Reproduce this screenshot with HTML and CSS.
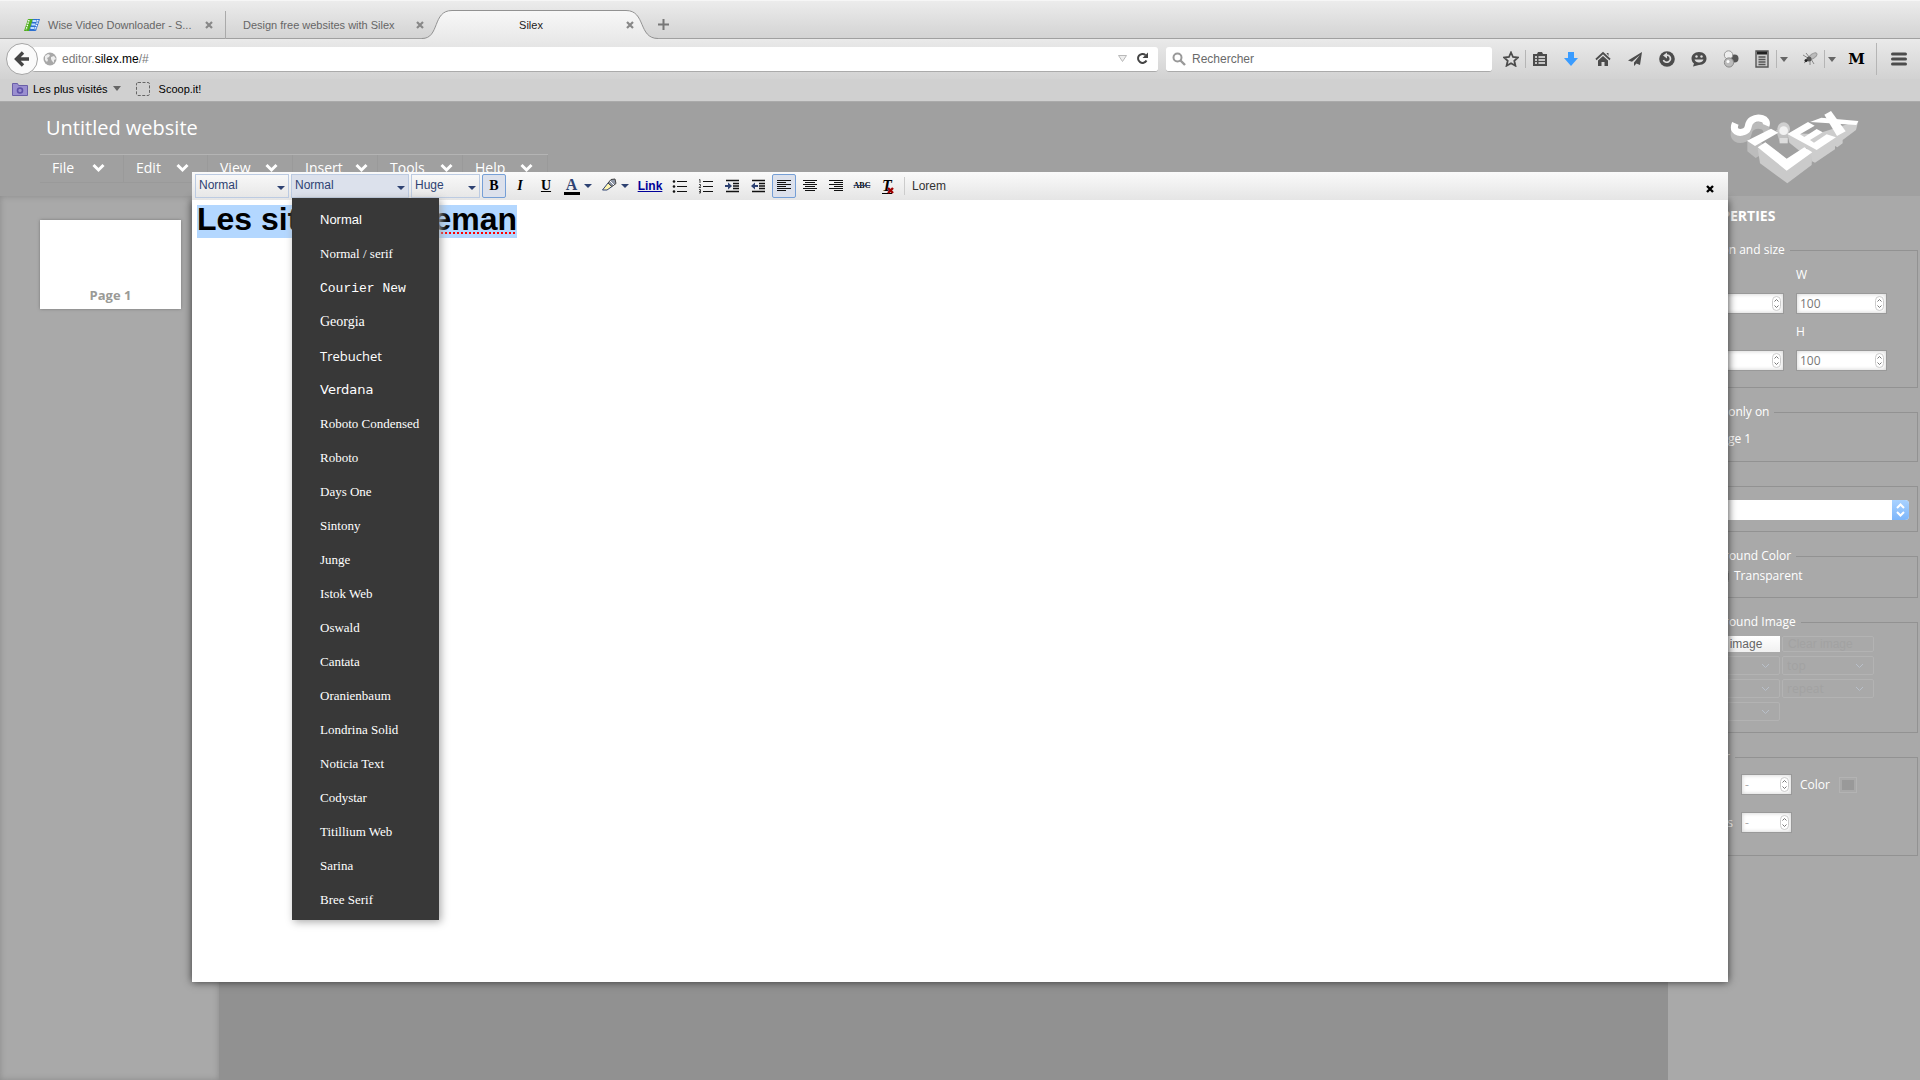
FILE: index.html
```html
<!DOCTYPE html>
<html lang="fr">
<head>
<meta charset="utf-8">
<title>Silex</title>
<link rel="stylesheet" href="styles.css">
</head>
<body>
<header class="browser">
  <nav class="tabs" aria-label="Tabs">
    <div class="tab tab-first">
      <svg class="favicon" viewBox="0 0 16 14" width="16" height="14"><path d="M4 1h6L6 13H0z" fill="#4fae1c"/><path d="M9 1h7l-4 12H5z" fill="#2c6fd0"/><path d="M5 2 2 12M14 2l-3 10" stroke="#fff" stroke-width="1.4" stroke-dasharray="1.5 1"/><path d="M8.500 3h4M7.500 6.500h4M6.500 10h4" stroke="#bfe0ff" stroke-width="2"/></svg>
      <a class="tab-name" href="#">Wise Video Downloader - S...</a>
      <button class="tab-close" aria-label="Close tab"><svg viewBox="0 0 8 8" width="8" height="8"><path d="M1 1l6 6M7 1 1 7" stroke="#888" stroke-width="2.200"/></svg></button>
    </div>
    <div class="tab tab-second">
      <a class="tab-name" href="#">Design free websites with Silex</a>
      <button class="tab-close" aria-label="Close tab"><svg viewBox="0 0 8 8" width="8" height="8"><path d="M1 1l6 6M7 1 1 7" stroke="#888" stroke-width="2.200"/></svg></button>
    </div>
    <div class="tab tab-active">
      <svg class="tab-shape" viewBox="0 0 236 30" width="236" height="30"><defs><linearGradient id="tabfill" x2="0" y2="1"><stop offset="0" stop-color="#f8f8f8"/><stop offset="1" stop-color="#e9e9e9"/></linearGradient></defs><path d="M0 28.500C18 28.500 10 .500 30 .500H204C224 .500 216 28.500 236 28.500V30H0z" fill="url(#tabfill)"/><path d="M0 28.500C18 28.500 10 .500 30 .500H204C224 .500 216 28.500 236 28.500" fill="none" stroke="#929292"/></svg>
      <a class="tab-name" href="#">Silex</a>
      <button class="tab-close" aria-label="Close tab"><svg viewBox="0 0 8 8" width="8" height="8"><path d="M1 1l6 6M7 1 1 7" stroke="#888" stroke-width="2.200"/></svg></button>
    </div>
    <button class="tab-new" aria-label="New tab"><svg viewBox="0 0 11 11" width="11" height="11"><path d="M5.500 0v11M0 5.500h11" stroke="#777" stroke-width="2"/></svg></button>
  </nav>
  <div class="navbar">
    <button class="back" aria-label="Back"><svg viewBox="0 0 16 16" width="16" height="16"><path d="M9 1.500 2.500 8 9 14.500M3 8h12" fill="none" stroke="#444" stroke-width="3.400"/></svg></button>
    <div class="url">
      <svg viewBox="0 0 14 14" width="14" height="14"><circle cx="7" cy="7" r="6.500" fill="#a8a8a8"/><path d="M2 4l3-2 2 1-1 2-2 1 1 2-1 2-2-2zM8 5l3-1 2 3-2 1 0 3-2-2-1-2z" fill="#eee"/></svg>
      <div class="url-field"><input class="plain" type="text" aria-label="Address"><span class="url-text">editor.<b>silex.me</b>/#</span></div>
      <svg viewBox="0 0 9 7" width="9" height="7"><path d="M.500.500h8l-4 6z" fill="#eee" stroke="#b9b9b9"/></svg>
      <button class="reload" aria-label="Reload"><svg viewBox="0 0 13 13" width="13" height="13"><path d="M10.500 8.500A4.500 4.500 0 1 1 9.500 3" fill="none" stroke="#444" stroke-width="2"/><path d="M12 .500V6H6.500z" fill="#444"/></svg></button>
    </div>
    <div class="search">
      <svg viewBox="0 0 14 14" width="14" height="14"><circle cx="5.500" cy="5.500" r="4" fill="none" stroke="#999" stroke-width="2"/><path d="M8.500 8.500 13 13" stroke="#999" stroke-width="2.400"/></svg>
      <input class="plain" type="search" placeholder="Rechercher" aria-label="Rechercher">
    </div>
    <div class="tools">
      <button aria-label="Bookmark"><svg viewBox="0 0 16 16" width="16" height="16"><path d="M8 1.500l2 4.500 5 .500-3.700 3.300 1.100 4.900L8 12.200l-4.400 2.500 1.100-4.900L1 6.500 6 6z" fill="none" stroke="#4c4c4c" stroke-width="1.800"/></svg></button>
      <i class="rule"></i>
      <button aria-label="Bookmarks list"><svg viewBox="0 0 16 16" width="16" height="16"><path d="M1 3h4l1-2h4l1 2h4v12H1z" fill="#4c4c4c"/><path d="M3 6h2M6.500 6H13M3 9h2M6.500 9H13M3 12h2M6.500 12H13" stroke="#eee" stroke-width="1.600"/></svg></button>
      <button class="t7" aria-label="Downloads"><svg viewBox="0 0 16 16" width="16" height="16"><path d="M5 1h6v6h4l-7 8-7-8h4z" fill="#3a9cff"/></svg></button>
      <button class="t8" aria-label="Home"><svg viewBox="0 0 16 16" width="16" height="16"><path d="M1 8.500 8 2l7 6.500" fill="none" stroke="#4c4c4c" stroke-width="1.800"/><path d="M3 9.500 8 5l5 4.500V15H9.500v-4h-3v4H3zM11.500 2h2v3z" fill="#4c4c4c"/></svg></button>
      <button class="t8" aria-label="Send"><svg viewBox="0 0 16 16" width="16" height="16"><path d="M15 1 1 9.500l4 1.200L13 4l-6 7.500V15l2.500-2.500L13 14z" fill="#4c4c4c"/></svg></button>
      <button class="t8" aria-label="Sync"><svg viewBox="0 0 16 16" width="16" height="16"><circle cx="8" cy="8" r="7.800" fill="#4c4c4c"/><path d="M6 4.500C11 3 13 8 10 10.500 7.500 12 5 11 4.500 9" fill="none" stroke="#ddd" stroke-width="1.600"/><path d="M8 1.500v6L4 4.500z" fill="#ddd"/></svg></button>
      <button class="t8" aria-label="Hello"><svg viewBox="0 0 16 16" width="16" height="16"><path d="M8 1c10 0 10 13 0 13L2 15.500l1-3C-2 8 1 1 8 1z" fill="#4c4c4c"/><circle cx="5.500" cy="5.500" r="1.200" fill="#ddd"/><circle cx="10.500" cy="5.500" r="1.200" fill="#ddd"/><path d="M3.500 8.500h9c-1 4-8 4-9 0z" fill="#ddd"/></svg></button>
      <button class="t8" aria-label="Extension"><svg viewBox="0 0 16 18" width="16" height="18"><circle cx="11.500" cy="8.500" r="4" fill="#555"/><circle cx="5.500" cy="5" r="4.200" fill="#eee" stroke="#999"/><circle cx="6" cy="12.500" r="4.600" fill="#bbb" stroke="#888"/><circle cx="5" cy="11.500" r="1.500" fill="#fff"/></svg></button>
      <button class="t7" aria-label="Notes"><svg viewBox="0 0 16 18" width="16" height="18"><path d="M2 1h12v16H2z" fill="#ccc" stroke="#555" stroke-width="1.400"/><path d="M3 3h10" stroke="#222" stroke-width="3"/><path d="M4.500 7h7M4.500 9.500h7M4.500 12h7M4.500 14.500h7" stroke="#555" stroke-width="1.400"/></svg></button>
      <i class="rule"></i><i class="down"></i>
      <button class="t8" aria-label="Debug"><svg viewBox="0 0 16 16" width="16" height="16"><path d="M1 4l5 3M4 2l4 5M2 12l5-4M8 14V8M12 13 9 8" stroke="#888"/><ellipse cx="11" cy="5" rx="4.500" ry="2.200" fill="#bbb" stroke="#999" transform="rotate(-35 11 5)"/><circle cx="7" cy="8" r="2.500" fill="#555"/><circle cx="4" cy="9.500" r="1.500" fill="#222"/></svg></button>
      <i class="rule"></i><i class="down"></i>
      <button class="letter-m" aria-label="M">M</button>
      <i class="rule rule-tall"></i>
      <button aria-label="Menu"><svg viewBox="0 0 16 14" width="16" height="14"><path d="M1.500 2h13M1.500 7h13M1.500 12h13" stroke="#4c4c4c" stroke-width="3" stroke-linecap="round"/></svg></button>
    </div>
  </div>
  <div class="bookmarks">
    <button><svg viewBox="0 0 16 14" width="16" height="14"><path d="M.500 1.500h5l1 2h9v10H.500z" fill="#9a8fd0" stroke="#6a5fa8"/><circle cx="8" cy="8.500" r="2.500" fill="none" stroke="#5d50a8" stroke-width="1.600"/></svg><span>Les plus visités</span><i class="down"></i></button>
    <button><svg viewBox="0 0 14 14" width="14" height="14"><rect x=".5" y=".5" width="13" height="13" rx="1.500" fill="none" stroke="#666" stroke-dasharray="3 1.500"/></svg><span class="scoop">Scoop.it!</span></button>
  </div>
</header>

<main class="app">
  <header class="app-head">
    <div class="app-bar">
      <h1>Untitled website</h1>
      <nav class="menu">
        <button>File<svg viewBox="0 0 13 10" width="13" height="10"><path d="M1.500 2 6.500 7l5-5" /></svg></button>
        <button>Edit<svg viewBox="0 0 13 10" width="13" height="10"><path d="M1.500 2 6.500 7l5-5" /></svg></button>
        <button>View<svg viewBox="0 0 13 10" width="13" height="10"><path d="M1.500 2 6.500 7l5-5" /></svg></button>
        <button>Insert<svg viewBox="0 0 13 10" width="13" height="10"><path d="M1.500 2 6.500 7l5-5" /></svg></button>
        <button>Tools<svg viewBox="0 0 13 10" width="13" height="10"><path d="M1.500 2 6.500 7l5-5" /></svg></button>
        <button>Help<svg viewBox="0 0 13 10" width="13" height="10"><path d="M1.500 2 6.500 7l5-5" /></svg></button>
      </nav>
    </div>
    <svg class="logo" viewBox="270 30 390 225" width="130" height="75" role="img" aria-label="Silex">
      <g fill="none" stroke="#bababa" stroke-width="20"><path d="M378 98c8-20-24-28-42-16s-4 26-22 34-38 0-30-24"/><path d="M285 86v24M300 95v28M378 78v14"/></g>
      <path d="M322 122v32l25 20 20-12V128z" fill="#bcbcbc"/>
      <path d="M353 145l7 45 82 60 73-55 2-38-77 20z" fill="#cacaca"/>
      <path d="M442 100l6 28 30 24 22-8 16 26v14l9 4 60-40 0-10 7 4 16-12v-10l40-30 7-28-125 40z" fill="#cdcdcd"/>
      <path d="M408 90l12 38h22l4-42z" fill="#c2c2c2"/><circle cx="431" cy="86" r="19" fill="#cfcfcf"/><circle cx="431" cy="92" r="13" fill="#f2f2f2"/><path d="M419 114h24v16h-24z" fill="#ddd"/>
      <g fill="#fff"><path d="M353 142l23-15 64 49 53-34 24 15-77 55z"/><path d="M321 122l72-36 22 12-70 40z"/><path d="M442 102l62-36 20 11-44 26 13 8 37-24 18 10-38 23 12 8 38-25 28 9-58 38z"/><path d="M553 44l20-11 44 61-26 14z"/><path d="M510 66l34-13 111 10-6 12z"/></g>
      <path d="M378 76c8-20-24-28-42-16s-4 26-22 34-38 0-28-24" fill="none" stroke="#fff" stroke-width="21"/>
    </svg>
  </header>
  <div class="columns">
    <aside class="pages"><a class="page-card" href="#">Page 1</a></aside>
    <section class="stage" aria-label="Stage"></section>
    <aside class="props">
      <h2>PROPERTIES</h2>
      <fieldset class="geometry"><legend>Position and size</legend>
        <label for="px">X</label><label for="pw">W</label>
        <span class="num"><input id="px" type="text"><svg viewBox="0 0 9 15" width="9" height="15"><rect x=".5" y=".5" width="8" height="14" rx="4"/><path d="M2.500 5.500l2-2 2 2M2.500 9.500l2 2 2-2"/></svg></span>
        <span class="num"><input id="pw" type="text" value="100"><svg viewBox="0 0 9 15" width="9" height="15"><rect x=".5" y=".5" width="8" height="14" rx="4"/><path d="M2.500 5.500l2-2 2 2M2.500 9.500l2 2 2-2"/></svg></span>
        <label for="py">Y</label><label for="ph">H</label>
        <span class="num"><input id="py" type="text"><svg viewBox="0 0 9 15" width="9" height="15"><rect x=".5" y=".5" width="8" height="14" rx="4"/><path d="M2.500 5.500l2-2 2 2M2.500 9.500l2 2 2-2"/></svg></span>
        <span class="num"><input id="ph" type="text" value="100"><svg viewBox="0 0 9 15" width="9" height="15"><rect x=".5" y=".5" width="8" height="14" rx="4"/><path d="M2.500 5.500l2-2 2 2M2.500 9.500l2 2 2-2"/></svg></span>
      </fieldset>
      <fieldset class="viewable"><legend>Visible only on</legend>
        <label class="tick"><input type="checkbox">Page 1</label>
      </fieldset>
      <fieldset class="link"><legend>Link</legend>
        <span class="combo"><select aria-label="Link"><option></option></select><svg viewBox="0 0 17 20" width="17" height="20"><path d="M5 8l3.500-3.500L12 8M5 12l3.500 3.500L12 12"/></svg></span>
      </fieldset>
      <fieldset class="bgcolor"><legend>Background Color</legend>
        <button class="well" aria-label="Background color"></button>
        <label class="tick"><input type="checkbox">Transparent</label>
      </fieldset>
      <fieldset class="bgimage"><legend>Background Image</legend>
        <button class="pick-image">Select image</button><button class="ghost" disabled>Clear image</button>
        <span class="ghost-pick"><select disabled aria-label="Scroll"><option></option></select><svg viewBox="0 0 9 6" width="9" height="6"><path d="M1 1l3.500 3.500L8 1"/></svg></span>
        <span class="ghost-pick"><select disabled aria-label="Vertical"><option>top</option></select><svg viewBox="0 0 9 6" width="9" height="6"><path d="M1 1l3.500 3.500L8 1"/></svg></span>
        <span class="ghost-pick"><select disabled aria-label="Horizontal"><option></option></select><svg viewBox="0 0 9 6" width="9" height="6"><path d="M1 1l3.500 3.500L8 1"/></svg></span>
        <span class="ghost-pick"><select disabled aria-label="Repeat"><option>repeat</option></select><svg viewBox="0 0 9 6" width="9" height="6"><path d="M1 1l3.500 3.500L8 1"/></svg></span>
        <span class="ghost-pick"><select disabled aria-label="Size"><option></option></select><svg viewBox="0 0 9 6" width="9" height="6"><path d="M1 1l3.500 3.500L8 1"/></svg></span>
      </fieldset>
      <fieldset class="border"><legend>Border</legend>
        <label class="border-width" for="bw">Width</label><span class="num"><input id="bw" type="text" value="-"><svg viewBox="0 0 9 15" width="9" height="15"><rect x=".5" y=".5" width="8" height="14" rx="4"/><path d="M2.500 5.500l2-2 2 2M2.500 9.500l2 2 2-2"/></svg></span>
        <label class="color-field">Color<button class="swatch" aria-label="Border color"></button></label>
        <label class="border-radius" for="br">Radius</label><span class="num"><input id="br" type="text" value="-"><svg viewBox="0 0 9 15" width="9" height="15"><rect x=".5" y=".5" width="8" height="14" rx="4"/><path d="M2.500 5.500l2-2 2 2M2.500 9.500l2 2 2-2"/></svg></span>
      </fieldset>
    </aside>
  </div>

  <section class="editor" role="dialog" aria-label="Text editor">
    <div class="bar">
      <span class="pick pick-format"><select aria-label="Format"><option>Normal</option></select></span>
      <div class="pick pick-font is-open"><button class="font-button" aria-haspopup="true">Normal</button>
        <ul class="fonts">
          <li class="f-sans">Normal</li><li>Normal / serif</li><li class="f-mono">Courier New</li><li class="f-georgia">Georgia</li><li class="f-treb">Trebuchet</li><li class="f-verdana">Verdana</li><li>Roboto Condensed</li><li>Roboto</li><li>Days One</li><li>Sintony</li><li>Junge</li><li>Istok Web</li><li>Oswald</li><li>Cantata</li><li>Oranienbaum</li><li>Londrina Solid</li><li>Noticia Text</li><li>Codystar</li><li>Titillium Web</li><li>Sarina</li><li>Bree Serif</li>
        </ul>
      </div>
      <span class="pick pick-size"><select aria-label="Size"><option>Huge</option></select></span>
      <button class="b on bold">B</button>
      <button class="b italic">I</button>
      <button class="b under">U</button>
      <button class="b wide"><span class="ink">A</span><i class="caret"></i></button>
      <button class="b wide" aria-label="Highlight"><svg viewBox="0 0 16 16" width="16" height="16"><path d="M1.500 12 7 5l4 3.500L6 12z" fill="#fff6b0" stroke="#2e4272"/><path d="M7 5l3-3.500L14 1l1 4.500-4 3z" fill="#8e97a8" stroke="#444"/><path d="M9 3l4 4" stroke="#fff"/></svg><i class="caret"></i></button>
      <button class="b link-button">Link</button>
      <button class="b" aria-label="Bullets"><svg viewBox="0 0 16 16" width="16" height="16"><path d="M5 3.500h10M5 8.500h10M5 13.500h10" stroke="#111"/><g fill="#111"><circle cx="2" cy="3.500" r="1.300"/><circle cx="2" cy="8.500" r="1.300"/><circle cx="2" cy="13.500" r="1.300"/></g></svg></button>
      <button class="b" aria-label="Numbers"><svg viewBox="0 0 16 16" width="16" height="16"><path d="M5 3.500h10M5 8.500h10M5 13.500h10" stroke="#111"/><path d="M1 2l1-.500v3.500M1 6.500h1.500v1.500L1 9.500h2M1 11.500h1.500V15H1M1 13.500h1.500" fill="none" stroke="#444"/></svg></button>
      <button class="b" aria-label="Indent"><svg viewBox="0 0 16 16" width="16" height="16"><path d="M2 2.500h13M9 5.500h6M9 8h6M9 10.500h6M2 13.500h13" stroke="#111" stroke-width="1.400"/><path d="M1 7h3V4.500L8 8l-4 3.500V9H1z" fill="#2e4272"/></svg></button>
      <button class="b" aria-label="Outdent"><svg viewBox="0 0 16 16" width="16" height="16"><path d="M2 2.500h13M9 5.500h6M9 8h6M9 10.500h6M2 13.500h13" stroke="#111" stroke-width="1.400"/><path d="M8 7H5V4.500L1 8l4 3.500V9h3z" fill="#2e4272"/></svg></button>
      <button class="b on" aria-label="Left"><svg viewBox="0 0 16 16" width="16" height="16"><path d="M1 2.500h14M1 4.500h9M1 6.500h14M1 8.500h9M1 10.500h14M1 12.500h9" stroke="#111"/></svg></button>
      <button class="b" aria-label="Center"><svg viewBox="0 0 16 16" width="16" height="16"><path d="M1 2.500h14M3 4.500h10M1 6.500h14M3 8.500h10M1 10.500h14M3 12.500h10" stroke="#111"/></svg></button>
      <button class="b" aria-label="Right"><svg viewBox="0 0 16 16" width="16" height="16"><path d="M1 2.500h14M6 4.500h9M1 6.500h14M6 8.500h9M1 10.500h14M6 12.500h9" stroke="#111"/></svg></button>
      <button class="b strike">ABC</button>
      <button class="b clear"><em>T</em><svg viewBox="0 0 7 7" width="7" height="7"><path d="M1 1l5 5M6 1 1 6" stroke="#a00000" stroke-width="2.400"/></svg></button>
      <i class="bar-rule"></i>
      <button class="lorem">Lorem</button>
      <button class="close" aria-label="Close"><svg viewBox="0 0 8 8" width="8" height="8"><path d="M1 1l6 6M7 1 1 7" stroke="#000" stroke-width="2.400"/></svg></button>
    </div>
    <div class="page" contenteditable="true" spellcheck="false"><span class="picked">Les sites de <span class="misspelt">Goeman</span></span></div>
  </section>
</main>
</body>
</html>
```
FILE: styles.css
```css
* { box-sizing: border-box; }
body { margin: 0; min-height: 100vh; display: flex; flex-direction: column; font: 12px/18px "Liberation Sans", Arial, sans-serif; color: #000; }
button, input, select { font: inherit; color: inherit; margin: 0; padding: 0; border: 0; background: none; border-radius: 0; outline: 0; }
select { appearance: none; opacity: 1; }
a { color: inherit; text-decoration: none; }
svg { display: block; flex: none; }
i { font-style: normal; flex: none; }

/* browser chrome */
.browser { background: #d0d0d0; border-bottom: 1px solid #aaa; }
.tabs { height: 39px; padding-top: 10px; display: flex; background: linear-gradient(#ececec, #d3d3d3); border-bottom: 1px solid #a0a0a0; border-top: 1px solid #f6f6f6; font-size: 11px; }
.tab { display: flex; align-items: center; color: #666; height: 28px; }
.tab-first { width: 226px; padding: 0 12px 0 24px; border-right: 1px solid #aaa; }
.tab-second { width: 204px; padding: 0 6px 0 17px; }
.tab-active { width: 220px; position: relative; padding: 0 16px 0 0; color: #222; }
.tab-shape { position: absolute; left: -8px; top: -1px; }
.tab-name { flex: 1; white-space: nowrap; position: relative; }
.favicon { margin-right: 8px; }
.tab-active .tab-name { text-align: center; padding-left: 6px; }
.tab-close { position: relative; }
.tab-new { margin-left: 8px; }
.navbar { height: 40px; padding: 0 13px 0 6px; display: flex; align-items: center; background: linear-gradient(#eaeaea, #d2d2d2); }
.back { width: 32px; height: 32px; border-radius: 50%; background: #fafafa; border: 1px solid #a5a5a5; display: grid; place-items: center; z-index: 1; }
.url, .search { height: 25px; background: #fff; display: flex; align-items: center; border-bottom: 1px solid #aaa; border-radius: 3px; }
.url { flex: 1; margin-left: -6px; padding: 0 9px 0 11px; }
.url-field { flex: 1; display: grid; margin-left: 5px; }
.url-field > * { grid-area: 1 / 1; }
.url-text { color: #777; pointer-events: none; }
.url-text b { font-weight: normal; color: #000; }
.reload { margin-left: 9px; }
.search { width: 326px; margin-left: 8px; padding: 0 6px; gap: 6px; }
.plain { flex: 1; min-width: 0; }
.plain::placeholder { color: #6a6a6a; opacity: 1; }
.tools { display: flex; align-items: center; margin-left: 11px; }
.rule { width: 1px; height: 18px; background: #b5b5b5; margin: 0 6px; }
.down { width: 0; border: 4px solid transparent; border-top: 5px solid #666; border-bottom: 0; }
.t7 { margin-left: 15px; }
.t8 { margin-left: 16px; }
.rule + .down { margin-left: -3px; }
.down + .t8 { margin-left: 14px; }
.letter-m { font: bold 15px/20px "DejaVu Serif", serif; width: 17px; margin-left: 12px; }
.rule-tall { height: 32px; margin: 0 14px 0 11px; }
.bookmarks { height: 22px; display: flex; align-items: center; gap: 15px; padding: 0 12px 3px; color: #000; font-size: 11px; }
.bookmarks button { display: flex; align-items: center; gap: 5px; }
.scoop { padding-left: 4px; }

/* site editor behind the dialog */
.app { flex: 1; display: flex; flex-direction: column; position: relative; font-family: "Open Sans", sans-serif; font-size: 12px; color: #fff; }
.app-head { height: 94px; background: #a0a0a0; display: flex; justify-content: space-between; padding: 8px 60px 0 40px; }
.app-bar { display: flex; flex-direction: column; }
h1 { margin: 6px 0 14px 6px; font: 20px/24px "Open Sans", sans-serif; }
.menu { display: flex; font-size: 14px; border-top: 1px solid #b4b4b4; }
.menu button { width: 84px; height: 28px; padding: 0 18px 2px 12px; display: flex; align-items: center; justify-content: space-between; border-right: 1px solid #9a9a9a; border-bottom: 1px solid #9a9a9a; }
.menu button:nth-child(n+3) { width: 85px; padding-right: 14px; }
.menu button:nth-child(4), .menu button:nth-child(5) { padding-right: 9px; }
.menu path { fill: none; stroke: #fff; stroke-width: 3; }
.columns { flex: 1; display: flex; }
.pages { width: 219px; background: #a9a9a9; box-shadow: inset 0 0 6px #8a8a8a; padding: 24px 38px 0 40px; }
.page-card { height: 89px; background: #fff; box-shadow: 0 0 3px #777; color: #9a9a96; font-size: 13px; font-weight: bold; display: flex; align-items: flex-end; justify-content: center; padding-bottom: 5px; }
.stage { flex: 1; background: #919191; }
.props { width: 252px; background: #a9a9a9; padding: 10px 2px 0 7px; }
h2 { margin: 0 0 15px 17px; font: bold 14px/20px "Open Sans", sans-serif; }
fieldset { border: 1px solid #929292; margin: 0 0 15px; padding: 0 8px 0 10px; min-width: 0; }
legend { padding: 0 5px; line-height: 18px; }
.num { display: flex; align-items: center; background: #fff; border: 1px solid #999; box-shadow: inset 0 0 4px #ccc; height: 21px; padding: 0 2px 0 3px; color: #777; }
.num input { flex: 1; min-width: 0; width: 10px; height: 19px; }
.num svg { fill: #fff; stroke: #ccc; }
.num svg path { fill: none; stroke: #777; }
.geometry { display: grid; grid-template-columns: 98px 91px; gap: 9px 12px; padding-top: 7px; padding-bottom: 16px; }
.tick { display: flex; align-items: center; gap: 5px; }
.tick input { width: 13px; height: 13px; }
.viewable { padding: 9px 8px 13px 20px; }
.viewable legend { margin-left: -12px; }
.link { padding-top: 5px; padding-bottom: 11px; }
.combo { display: flex; height: 20px; background: #fff; border-radius: 4px; }
.combo select { flex: 1; }
.combo svg { background: linear-gradient(#a9d2ff, #7db6fb); border-radius: 0 4px 4px 0; fill: none; stroke: #fff; stroke-width: 2; }
.bgcolor { display: flex; gap: 5px; padding-top: 2px; padding-bottom: 12px; }
.well { width: 25px; height: 18px; border: 1px solid #b5b5b5; }
.bgimage { display: grid; grid-template-columns: 94px 92px; gap: 4px 2px; padding-top: 5px; padding-bottom: 11px; font: 12px/14px "Liberation Sans", sans-serif; }
.bgimage legend { font: 12px/18px "Open Sans", sans-serif; }
.pick-image, .ghost { height: 16px; text-align: left; padding: 0 5px; }
.pick-image { background: linear-gradient(#fff, #f0f0f0); color: #666; padding-left: 7px; }
.ghost { border: 1px solid #b3b3b3; color: #a2a2a2; border-radius: 2px; }
.ghost-pick { height: 19px; border: 1px solid #b3b3b3; border-radius: 2px; display: flex; align-items: center; padding: 0 9px 0 4px; color: #a2a2a2; font-family: "Open Sans", sans-serif; }
.ghost-pick select { flex: 1; min-width: 0; }
.ghost-pick svg { fill: none; stroke: #b9c0ca; }
.border { display: grid; grid-template-columns: 47px 51px 1fr; gap: 17px 8px; padding-top: 8px; padding-bottom: 22px; }
.border > label { line-height: 21px; }
.border .color-field { display: flex; align-items: center; gap: 9px; }
.border .border-radius { grid-column: 1; text-align: right; }
.border > .num { color: #aaa; }
.swatch { width: 18px; height: 16px; background: #999; border: 1px solid #b3b3b3; box-shadow: inset 0 0 0 2px #a9a9a9; }

/* rich text dialog */
.editor { position: absolute; top: 70px; bottom: 98px; left: 10%; right: 10%; display: flex; flex-direction: column; font: 12px/18px "Liberation Sans", Arial, sans-serif; color: #000; }
.bar { position: relative; z-index: 1; height: 28px; padding: 0 14px 0 3px; background: linear-gradient(#fafafa, #e5e5e5); display: flex; align-items: center; gap: 2px; }
.pick { position: relative; height: 24px; border: 1px solid #bccbe2; color: #2e4272; }
.pick::after, .caret { content: ""; border: 4px solid transparent; border-top: 4px solid #2e4272; border-bottom: 0; }
.pick::after { position: absolute; right: 3px; top: 11px; }
.pick select, .font-button { width: 100%; height: 20px; padding-left: 3px; text-align: left; display: block; }
.pick-format { width: 94px; }
.pick-font { width: 118px; }
.pick-size { width: 69px; }
.is-open { background: #dce1ec; }
.fonts { position: absolute; z-index: 2; left: 0; top: 23px; width: 147px; margin: 0; padding: 5px 0 3px; list-style: none; background: #383838; color: #fff; box-shadow: 2px 2px 8px #aaa; font: 13px/34px "Liberation Serif", "Times New Roman", serif; }
.fonts li { padding-left: 28px; height: 34px; }
.f-sans { font-family: "Liberation Sans", Arial, sans-serif; }
.f-mono { font-family: "Liberation Mono", "Courier New", monospace; line-height: 36px; }
.fonts .f-georgia { font-size: 14px; }
.f-treb { font-family: "Open Sans", sans-serif; }
.f-verdana { font-family: "DejaVu Sans", Verdana, sans-serif; }
.b { width: 24px; height: 24px; display: flex; align-items: center; justify-content: center; border: 1px solid transparent; flex: none; }
.on { background: #dce1ec; border-color: #759fd6; border-radius: 2px; }
.bold, .italic, .under { font: bold 14px/20px "Liberation Serif", serif; }
.italic { font-style: italic; }
.under { text-decoration: underline; }
.wide { width: 35px; gap: 4px; }
.ink { width: 16px; font: bold 16px/14px "Liberation Serif", serif; color: #2e4272; border-bottom: 3px solid #000; }
.link-button { width: 32px; font-weight: bold; color: #009; text-decoration: underline; }
.strike { font: bold 8px/20px "Liberation Serif", serif; text-decoration: line-through #2e4272; }
.clear { align-items: flex-end; padding-bottom: 3px; }
.clear em { font: italic bold 16px/15px "Liberation Serif", serif; border-bottom: 1px solid #000; }
.clear svg { margin-left: -5px; }
.bar-rule { width: 1px; height: 18px; background: #ccc; margin: 0 5px 0 2px; }
.lorem { color: #333; }
.close { margin-left: auto; padding-top: 6px; }
.page { flex: 1; padding: 5px; background: #fff; box-shadow: 0 0 8px #333; font: bold 32px/33px "Liberation Sans", Arial, sans-serif; outline: 0; }
.picked { background: #b3d7ff; display: block; width: fit-content; height: 33px; line-height: 28px; }
.misspelt { text-decoration: underline dotted red 2px; text-underline-offset: 2px; text-decoration-skip-ink: none; }
```
